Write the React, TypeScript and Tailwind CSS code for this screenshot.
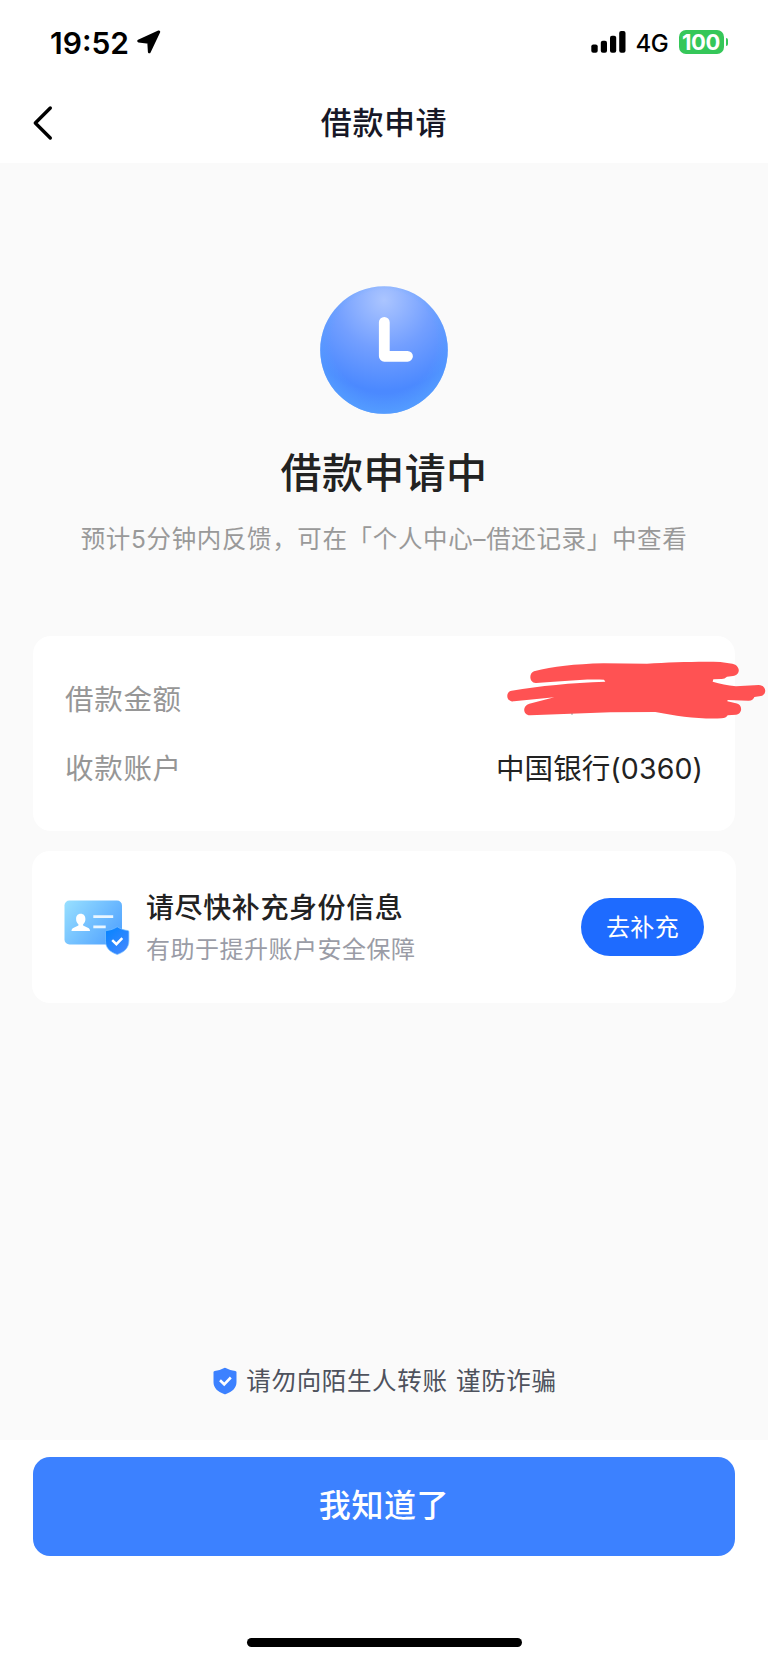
import type { ReactNode } from "react"

/* ------------------------------------------------------------------ */
/*  Icons                                                               */
/* ------------------------------------------------------------------ */

function LocationArrow() {
  return (
    <svg width="24" height="24" viewBox="0 0 24 24" aria-hidden="true">
      <path
        d="M1.600 11 21.800 1.900 12.300 21.900 11.700 12.300Z"
        fill="#000"
        stroke="#000"
        strokeWidth="2.800"
        strokeLinejoin="round"
      />
    </svg>
  )
}

function SignalBars() {
  return (
    <svg width="36" height="24" viewBox="0 0 36 24" aria-hidden="true">
      <rect x="0.300" y="14.500" width="6.400" height="8.200" rx="2" />
      <rect x="9.800" y="10.800" width="6.200" height="11.900" rx="2" />
      <rect x="19" y="5.800" width="6.200" height="16.900" rx="2" />
      <rect x="28.200" y="1" width="6.300" height="21.700" rx="2" />
    </svg>
  )
}

function BackChevron() {
  return (
    <svg width="22" height="36" viewBox="0 0 22 36" fill="none" aria-hidden="true">
      <path d="M18.300 3 3.300 18l15 15" stroke="#000" strokeWidth="3.400" strokeLinecap="round" strokeLinejoin="round" />
    </svg>
  )
}

function ClockIcon() {
  return (
    <svg width="128" height="128" viewBox="0 0 128 128" fill="none" aria-hidden="true">
      <defs>
        <radialGradient id="clock-fill" cx="64" cy="14" r="116" gradientUnits="userSpaceOnUse">
          <stop offset="0" stopColor="#abc5ff" />
          <stop offset="0.420" stopColor="#739fff" />
          <stop offset="0.780" stopColor="#4b89ff" />
          <stop offset="1" stopColor="#4b8dff" />
        </radialGradient>
        <radialGradient id="clock-rim" cx="64" cy="56" r="74" gradientUnits="userSpaceOnUse">
          <stop offset="0.700" stopColor="#58a4ff" stopOpacity="0" />
          <stop offset="1" stopColor="#58a4ff" stopOpacity="0.750" />
        </radialGradient>
      </defs>
      <circle cx="64" cy="64" r="63.800" fill="url(#clock-fill)" />
      <circle cx="64" cy="64" r="63.800" fill="url(#clock-rim)" />
      <path d="M64.300 36.300V70.300H87.500" stroke="#fff" strokeWidth="10.800" strokeLinecap="round" strokeLinejoin="round" />
    </svg>
  )
}

function IdCardIcon() {
  return (
    <svg width="68" height="58" viewBox="0 0 68 58" fill="none" aria-hidden="true">
      <defs>
        <linearGradient id="card-fill" x1="2" y1="4" x2="54" y2="46" gradientUnits="userSpaceOnUse">
          <stop stopColor="#96deff" />
          <stop offset="1" stopColor="#4ea0ff" />
        </linearGradient>
        <linearGradient id="badge-fill" x1="44" y1="32" x2="64" y2="54" gradientUnits="userSpaceOnUse">
          <stop stopColor="#0a84ff" />
          <stop offset="1" stopColor="#4488ff" />
        </linearGradient>
      </defs>
      <rect x="0.500" y="2.500" width="57.500" height="44" rx="5" fill="url(#card-fill)" />
      <path
        d="M16.700 15.800c3 0 4.700 2.200 4.700 5.200 0 2.300-.8 4.100-2.300 5.300v1.300l5.200 2.300c1.100.5 1.700 1.500 1.700 3.100H7.500c0-1.600.6-2.600 1.700-3.100l5.200-2.300v-1.300c-1.500-1.200-2.300-3-2.300-5.300 0-3 1.600-5.200 4.600-5.200Z"
        fill="#fff"
      />
      <path d="M29.300 17.200h19.900v2.700H29.300zM29.300 27.500h12.400v2.700H29.300z" fill="#eaf6ff" />
      <path
        d="M53.200 28.800c3.400 2.200 6.900 3.400 10.500 3.700.8.100 1.200.5 1.200 1.300v9c0 7.200-4.500 11.300-11.700 13.700-7.200-2.400-11.700-6.500-11.700-13.700v-9c0-.8.4-1.200 1.200-1.300 3.600-.3 7.100-1.500 10.500-3.700Z"
        fill="url(#badge-fill)"
        stroke="#7cc3ff"
        strokeWidth="0.700"
      />
      <path d="m48.200 42.200 4.200 4 5.900-6" stroke="#fff" strokeWidth="2.500" />
    </svg>
  )
}

function ShieldIcon() {
  return (
    <svg width="24" height="28" viewBox="0 0 24 28" fill="none" aria-hidden="true">
      <path
        d="M11.200.9a1.900 1.900 0 0 1 1.500 0c3 1.500 6.200 2.500 9.600 3 .7.100 1.200.6 1.200 1.400V15c0 6-4.200 9.700-10.500 12-.7.300-1.300.3-2 0C4.700 24.700.5 21 .5 15V5.300c0-.8.5-1.300 1.200-1.400 3.400-.5 6.500-1.500 9.500-3Z"
        fill="#3c81ff"
      />
      <path d="m7 13.300 4.200 4 6.600-6.800" stroke="#fff" strokeWidth="2.600" />
    </svg>
  )
}

/* Marker strokes hiding the loan amount */
function AmountScribble() {
  return (
    <svg
      className="absolute left-[472.5px] top-[25px]"
      width="262"
      height="60"
      viewBox="77 122 786 180"
      aria-hidden="true"
    >
      <path
        d="M161 153C220 139 280 131 370 129L500 130C570 126 660 123 720 125L756 130C783 136 780 166 758 167L740 169Q732 177 722 176L699 177L697 184C720 190 740 195 767 198L835 194C861 194 861 228 837 228L822 230Q818 242 803 241L742 239L741 243L767 249C788 252 787 281 767 283L742 285Q737 294 724 294C660 297 590 288 525 275L390 276L150 285C127 286 125 255 147 250L222 231L101 243C77 247 74 214 94 211C180 196 270 188 375 184L371 178C300 175 230 185 168 188C147 190 144 159 161 153Z"
        fill="#ff5253"
      />
      <circle cx="275" cy="281" r="1.500" fill="#333" />
    </svg>
  )
}

/* ------------------------------------------------------------------ */
/*  Pieces                                                              */
/* ------------------------------------------------------------------ */

function StatusBar() {
  return (
    <div className="flex h-[84px] items-center justify-between pl-[50px] pr-[40px]">
      <div className="flex items-center gap-[8px]">
        <span className="pt-px text-[30px] font-semibold leading-none">19:52</span>
        <LocationArrow />
      </div>
      <div className="flex items-center">
        <SignalBars />
        <span className="ml-[9px] w-[43px] pt-[3px] text-[24px] font-medium leading-none tracking-[-0.5px]">4G</span>
        <span className="flex h-6 w-[45px] items-center justify-center rounded-[7px] bg-[#35c759] text-[22px] font-bold leading-none tracking-[-0.4px] text-white">
          100
        </span>
        <span className="ml-[2px] h-2 w-[2.5px] rounded-r-full bg-[#35c759]" />
      </div>
    </div>
  )
}

function InfoRow({ label, children }: { label: string; children?: ReactNode }) {
  return (
    <div className="flex h-[69px] items-center justify-between">
      <span className="text-[28.5px] leading-none tracking-[0.7px] text-[#969696]">{label}</span>
      {children}
    </div>
  )
}

/* ------------------------------------------------------------------ */
/*  Page                                                                */
/* ------------------------------------------------------------------ */

export default function App() {
  return (
    <div className="flex h-[1663px] w-[768px] flex-col overflow-hidden bg-white font-['Inter','Noto_Sans_CJK_SC',sans-serif] text-black">
      <StatusBar />

      <header className="grid h-[79px] grid-cols-[1fr_auto_1fr] items-center px-8 pb-[2px]">
        <button type="button" aria-label="返回" className="justify-self-start">
          <BackChevron />
        </button>
        <h1 className="text-[31px] font-medium leading-none tracking-[0.6px] text-[#171827]">借款申请</h1>
        <span />
      </header>

      <main className="flex h-[1277px] flex-col bg-[#fafafa] px-8">
        <section className="flex flex-col items-center pt-[123px]">
          <ClockIcon />
          <h2 className="mt-[37px] text-[41px] font-medium leading-[44px] tracking-[0.4px] text-[#222]">借款申请中</h2>
          <p className="mt-[28px] whitespace-nowrap text-[24.5px] leading-[32px] tracking-[0.64px] text-[#999]">
            预计5分钟内反馈{"\uFF0C"}可在「个人中心–借还记录」中查看
          </p>
        </section>

        <section className="relative mx-px mt-[81px] h-[195px] rounded-[18px] bg-white px-[32px] pt-[30px]">
          <InfoRow label="借款金额" />
          <InfoRow label="收款账户">
            <span className="text-[28.5px] leading-none tracking-[0.1px] text-[#222]">中国银行(0360)</span>
          </InfoRow>
          <AmountScribble />
        </section>

        <section className="mt-5 flex h-[152px] items-center rounded-[18px] bg-white px-8">
          <IdCardIcon />
          <div className="ml-[14px] flex-1 pt-[3px]">
            <h3 className="text-[28px] font-medium leading-[42px] tracking-[0.6px] text-[#222]">请尽快补充身份信息</h3>
            <p className="text-[24px] leading-[42px] tracking-[0.5px] text-[#9a9ca6]">有助于提升账户安全保障</p>
          </div>
          <button
            type="button"
            className="h-[58px] w-[123px] rounded-full bg-[#1e6bff] pt-px text-[24px] leading-none tracking-[0.4px] text-white"
          >
            去补充
          </button>
        </section>

        <div className="mb-[43px] mt-auto flex h-8 items-center justify-center gap-[9px] pl-[2px]">
          <ShieldIcon />
          <span className="text-[24.5px] leading-none tracking-[0.65px] text-[#4e525d] [word-spacing:1px]">
            请勿向陌生人转账 谨防诈骗
          </span>
        </div>
      </main>

      <footer className="flex flex-1 flex-col items-center px-[33px] pt-[17px]">
        <button
          type="button"
          className="h-[98.5px] w-full rounded-[17px] bg-[#3c81ff] pb-px text-[32px] font-medium leading-none tracking-[0.6px] text-white"
        >
          我知道了
        </button>
        <div className="mb-4 mt-auto h-[9.5px] w-[275px] rounded-full bg-black" />
      </footer>
    </div>
  )
}
